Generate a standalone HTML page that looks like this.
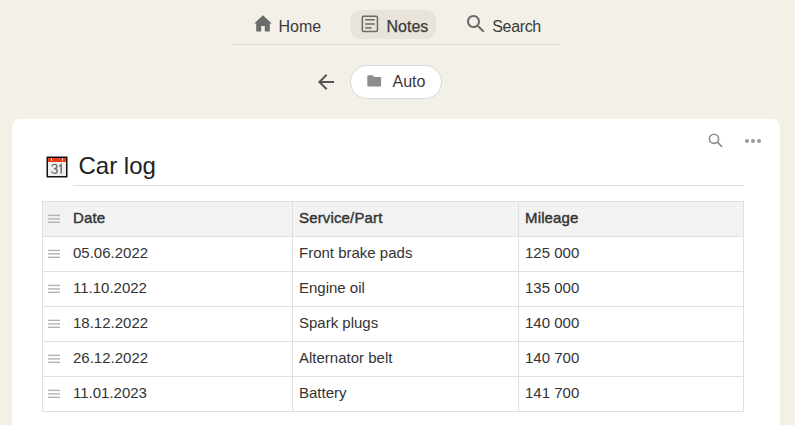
<!DOCTYPE html>
<html><head><meta charset="utf-8">
<style>
html,body{margin:0;padding:0}
body{width:795px;height:425px;overflow:hidden;background:#f3f0e7;position:relative;font-family:"Liberation Sans",sans-serif;color:#333}
.a{position:absolute}
.t{position:absolute;white-space:nowrap;line-height:20px;font-size:16px;color:#3a3a3a}
svg{position:absolute;left:0;top:0}
.navline{left:233px;top:44px;width:326px;height:1px;background:#d9dbe0}
.pill{left:350px;top:10px;width:86px;height:29px;border-radius:11px;background:#e8e4da}
.auto{left:350px;top:65px;width:90px;height:32px;border-radius:17px;background:#fff;border:1px solid #d6d8de}
.card{left:12px;top:119px;width:768px;height:330px;border-radius:8px;background:#fff}
.title-line{left:73px;top:185px;width:671px;height:1px;background:#dedede}
.hdr{left:43px;top:202px;width:700px;height:34px;background:#f2f2f2}
.hl{position:absolute;left:42px;width:702px;height:1px;background:#dfdfdf}
.vl{position:absolute;top:201px;width:1px;height:211px;background:#dfdfdf}
.tc{position:absolute;white-space:nowrap;font-size:15px;line-height:20px;color:#333}
.tc.h{-webkit-text-stroke:0.4px #333;letter-spacing:0.15px}
</style></head><body>
<div class="a navline"></div>
<div class="a pill"></div>
<div class="a auto"></div>
<div class="a card"></div>
<div class="a title-line"></div>
<div class="a hdr"></div>
<div class="hl" style="top:201px"></div>
<div class="hl" style="top:236px"></div>
<div class="hl" style="top:271px"></div>
<div class="hl" style="top:306px"></div>
<div class="hl" style="top:341px"></div>
<div class="hl" style="top:376px"></div>
<div class="hl" style="top:411px"></div>
<div class="vl" style="left:42px"></div>
<div class="vl" style="left:292px"></div>
<div class="vl" style="left:518px"></div>
<div class="vl" style="left:743px"></div>

<svg width="795" height="425" viewBox="0 0 795 425">
  <!-- home -->
  <path fill="#6b6b6b" d="M254.2,23.5 L263,15.2 L271.8,23.5 L269.8,23.5 L269.8,31.6 L264.8,31.6 L264.8,26 L261.2,26 L261.2,31.6 L256.2,31.6 L256.2,23.5 Z"/>
  <!-- notes -->
  <rect x="362.35" y="16.35" width="15.1" height="15.1" rx="1.2" fill="none" stroke="#6b6b6b" stroke-width="1.5"/>
  <rect x="365.2" y="19.05" width="9.5" height="1.5" fill="#6b6b6b"/>
  <rect x="365.2" y="23.25" width="9.5" height="1.5" fill="#6b6b6b"/>
  <rect x="365.2" y="27.15" width="6.4" height="1.5" fill="#6b6b6b"/>
  <!-- search -->
  <g transform="translate(464,12)" fill="#6b6b6b">
    <path d="M15.5 14h-.79l-.28-.27C15.41 12.59 16 11.110 16 9.5 16 5.91 13.09 3 9.5 3S3 5.91 3 9.5 5.91 16 9.5 16c1.61 0 3.09-.59 4.23-1.57l.27.28v.79l5 4.99L20.49 19l-4.99-5zm-6 0C7.01 14 5 11.99 5 9.5S7.01 5 9.5 5 14 7.01 14 9.5 11.99 14 9.5 14z"/>
  </g>
  <!-- back arrow -->
  <g transform="translate(314,70)" fill="#555">
    <path d="M20 11H7.83l5.59-5.59L12 4l-8 8 8 8 1.41-1.41L7.83 13H20v-2z"/>
  </g>
  <!-- folder -->
  <path fill="#8c8c8c" d="M367.3,76 Q367.3,75.2 368.1,75.2 L372.6,75.2 L374.2,76.9 L380.3,76.9 Q381.1,76.9 381.1,77.7 L381.1,85.6 Q381.1,86.4 380.3,86.4 L368.1,86.4 Q367.3,86.4 367.3,85.6 Z"/>
  <!-- card search -->
  <circle cx="714" cy="138.8" r="4.6" fill="none" stroke="#8f8f8f" stroke-width="1.6"/>
  <line x1="717.4" y1="142.2" x2="722" y2="146.8" stroke="#8f8f8f" stroke-width="1.7"/>
  <!-- dots -->
  <circle cx="747" cy="141" r="2" fill="#999"/>
  <circle cx="753" cy="141" r="2" fill="#999"/>
  <circle cx="759" cy="141" r="2" fill="#999"/>
  <!-- calendar -->
  <rect x="46.5" y="156.5" width="21" height="21" fill="#111"/>
  <rect x="48" y="158" width="18" height="18" fill="#eeeeee"/>
  <rect x="48" y="158" width="18" height="4" fill="#ea3b1d"/>
  <rect x="51" y="158.5" width="1" height="2" fill="#fff"/>
  <rect x="62" y="158.5" width="1" height="2" fill="#fff"/>
  <path d="M51.9,166.3 Q52.4,164.4 54.5,164.4 Q56.9,164.4 56.9,166.5 Q56.9,168.6 54.3,168.7 Q57.2,168.8 57.2,171.1 Q57.2,173.4 54.5,173.4 Q52.2,173.4 51.7,171.4 M54,168.7 L54.5,168.7" fill="none" stroke="#6a6a6a" stroke-width="1.3"/>
  <path d="M59.2,166.6 L61.2,164.6 L61.2,173.6" fill="none" stroke="#6a6a6a" stroke-width="1.4"/>
  <rect x="48" y="214.70" width="12" height="1.4" fill="#b3b3b3"/><rect x="48" y="218.20" width="12" height="1.4" fill="#b3b3b3"/><rect x="48" y="221.60" width="12" height="1.4" fill="#b3b3b3"/>
<rect x="48" y="249.70" width="12" height="1.4" fill="#b3b3b3"/><rect x="48" y="253.20" width="12" height="1.4" fill="#b3b3b3"/><rect x="48" y="256.60" width="12" height="1.4" fill="#b3b3b3"/>
<rect x="48" y="284.70" width="12" height="1.4" fill="#b3b3b3"/><rect x="48" y="288.20" width="12" height="1.4" fill="#b3b3b3"/><rect x="48" y="291.60" width="12" height="1.4" fill="#b3b3b3"/>
<rect x="48" y="319.70" width="12" height="1.4" fill="#b3b3b3"/><rect x="48" y="323.20" width="12" height="1.4" fill="#b3b3b3"/><rect x="48" y="326.60" width="12" height="1.4" fill="#b3b3b3"/>
<rect x="48" y="354.70" width="12" height="1.4" fill="#b3b3b3"/><rect x="48" y="358.20" width="12" height="1.4" fill="#b3b3b3"/><rect x="48" y="361.60" width="12" height="1.4" fill="#b3b3b3"/>
<rect x="48" y="389.70" width="12" height="1.4" fill="#b3b3b3"/><rect x="48" y="393.20" width="12" height="1.4" fill="#b3b3b3"/><rect x="48" y="396.60" width="12" height="1.4" fill="#b3b3b3"/>
</svg>

<div class="t" style="left:278.5px;top:17px">Home</div>
<div class="t" style="left:386.5px;top:17px;-webkit-text-stroke:0.25px #3a3a3a">Notes</div>
<div class="t" style="left:492.3px;top:17px;letter-spacing:-0.35px">Search</div>
<div class="t" style="left:392.5px;top:72px">Auto</div>
<div class="t" style="left:78.5px;top:151.4px;font-size:24px;line-height:30px;color:#222">Car log</div>
<div class="tc h" style="left:73px;top:207.6px">Date</div>
<div class="tc h" style="left:299px;top:207.6px">Service/Part</div>
<div class="tc h" style="left:525px;top:207.6px">Mileage</div>
<div class="tc" style="left:73px;top:242.6px">05.06.2022</div>
<div class="tc" style="left:299px;top:242.6px">Front brake pads</div>
<div class="tc" style="left:525px;top:242.6px">125 000</div>
<div class="tc" style="left:73px;top:277.6px">11.10.2022</div>
<div class="tc" style="left:299px;top:277.6px">Engine oil</div>
<div class="tc" style="left:525px;top:277.6px">135 000</div>
<div class="tc" style="left:73px;top:312.6px">18.12.2022</div>
<div class="tc" style="left:299px;top:312.6px">Spark plugs</div>
<div class="tc" style="left:525px;top:312.6px">140 000</div>
<div class="tc" style="left:73px;top:347.6px">26.12.2022</div>
<div class="tc" style="left:299px;top:347.6px">Alternator belt</div>
<div class="tc" style="left:525px;top:347.6px">140 700</div>
<div class="tc" style="left:73px;top:382.6px">11.01.2023</div>
<div class="tc" style="left:299px;top:382.6px">Battery</div>
<div class="tc" style="left:525px;top:382.6px">141 700</div>
</body></html>
